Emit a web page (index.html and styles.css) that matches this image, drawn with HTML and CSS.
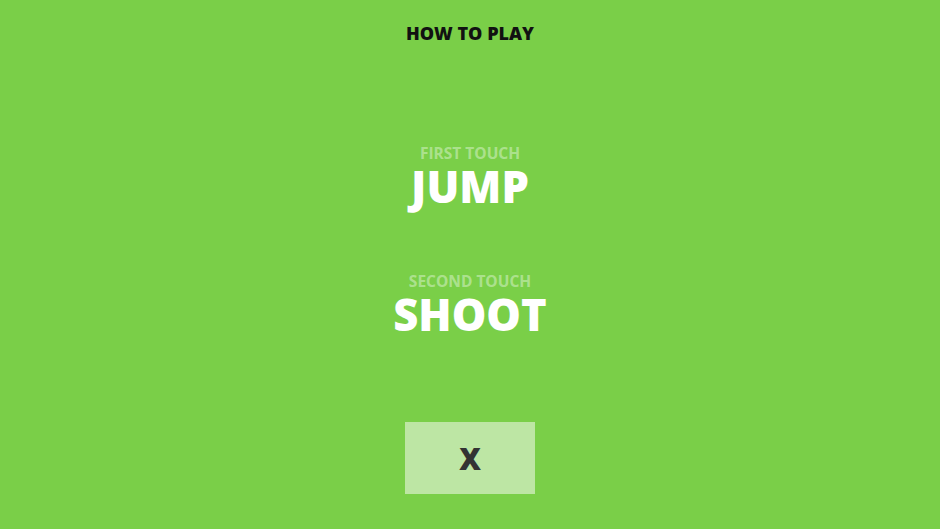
FILE: index.html
```html
<!DOCTYPE html>
<html lang="en">
<head>
  <meta charset="UTF-8">
  <meta name="viewport" content="width=device-width, initial-scale=1.0">
  <title>How to play</title>
  <link rel="stylesheet" href="styles.css">
</head>
<body>
  <div class="screen">
    <h1 class="title">HOW TO PLAY</h1>

    <!-- controls list -->
    <div class="controls">
      <div class="control">
        <div class="label">FIRST TOUCH</div>
        <div class="action">JUMP</div>
      </div>
      <div class="control">
        <div class="label">SECOND TOUCH</div>
        <div class="action">SHOOT</div>
      </div>
    </div>

    <button class="close-button">X</button>
  </div>
</body>
</html>
```

FILE: styles.css
```css
body {
  margin: 0;
  font-family: "Open Sans", Arial, sans-serif;
  background-color: #7acf48;
  height: 100vh;
}

.screen {
  display: flex;
  flex-direction: column;
  align-items: center;
  height: 100%;
}

.title {
  margin: 22px 0 0;
  font-size: 18px;
  font-weight: 800;
  color: #111;
  line-height: 22px;
}

.controls {
  display: flex;
  flex-direction: column;
  align-items: center;
  gap: 62px;
  margin-top: 100px;
}

.control {
  display: flex;
  flex-direction: column;
  align-items: center;
  gap: 2px;
}

.label {
  font-size: 15.5px;
  font-weight: 700;
  color: rgba(255, 255, 255, 0.4);
  line-height: 18px;
}

.action {
  font-size: 43.5px;
  font-weight: 800;
  color: #fff;
  line-height: 46px;
}

.close-button {
  margin-top: 84px;
  width: 130px;
  height: 72px;
  border: none;
  background-color: #bde6a4;
  color: #333;
  font-family: "Open Sans", Arial, sans-serif;
  font-size: 30px;
  font-weight: 800;
  cursor: pointer;
}
```
